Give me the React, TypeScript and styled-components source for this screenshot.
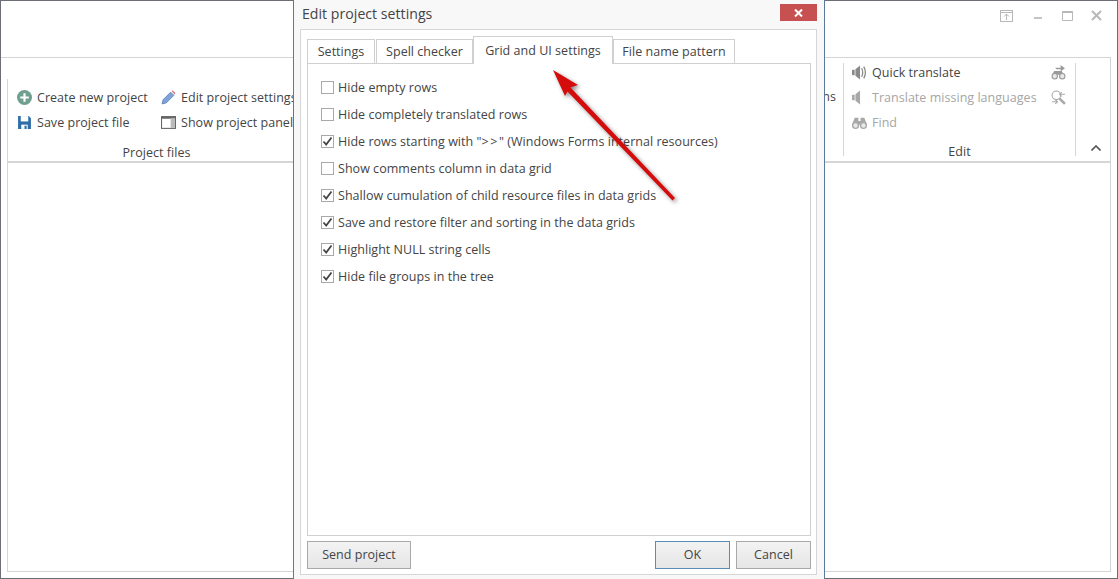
import React from "react";
import styled, { createGlobalStyle } from "styled-components";

const Global = createGlobalStyle`
  html, body { margin: 0; padding: 0; background: #fff; }
  body { font-family: "Open Sans", "Noto Sans", "Liberation Sans", sans-serif; font-size: 12.5px; letter-spacing: 0.03px; color: #444; }
  * { box-sizing: border-box; }
`;

const Desktop = styled.div`
  position: relative;
  width: 1118px;
  height: 579px;
  overflow: hidden;
`;

const AppWindow = styled.div`
  width: 100%;
  height: 100%;
  display: flex;
  flex-direction: column;
  background: #fff;
  border: 1px solid #6b6f75;
`;

const TitleBar = styled.div`
  height: 56px;
  display: flex;
  justify-content: flex-end;
  align-items: flex-start;
  padding: 9px 13px 0 0;
  gap: 16px;
  flex: none;
`;

const WinIcon = styled.svg<{ $ml?: number; $mr?: number }>`
  width: 13px;
  height: 13px;
  display: block;
  margin-left: ${(p) => p.$ml ?? 0}px;
  margin-right: ${(p) => p.$mr ?? 0}px;
`;

const RibbonFrame = styled.div`
  flex: 1;
  min-height: 0;
  display: flex;
  flex-direction: column;
  border-top: 1px solid #d4d4d4;
  margin-right: 6px;
`;

const Ribbon = styled.div`
  height: 105px;
  flex: none;
  display: flex;
  margin-left: 6px;
  border-bottom: 2px solid #d6d6d6;
  border-right: 1px solid #d4d4d4;
`;

const LeftGroup = styled.div`
  width: 290px;
  margin-top: 21px;
  display: flex;
  flex-direction: column;
  border-left: 1px solid #d6d6d6;
  padding: 6px 0 0 9px;
`;

const MiddleGroup = styled.div`
  flex: 1;
  display: flex;
  justify-content: flex-end;
  padding: 29px 7px 0 0;
  color: #444;
  line-height: 20px;
`;

const EditGroup = styled.div`
  width: 233px;
  margin: 5px 0;
  border-left: 1px solid #d6d6d6;
  border-right: 1px solid #d6d6d6;
  display: flex;
  flex-direction: column;
  padding: 0 0 0 8px;
`;

const EditRows = styled.div`
  margin-top: -3px;
`;

const Collapse = styled.div`
  width: 34px;
  display: flex;
  align-items: flex-end;
  justify-content: center;
  padding: 0 0 10px 6px;
`;

const Columns = styled.div`
  display: flex;
  gap: 14px;
`;

const Column = styled.div<{ $w: number }>`
  display: flex;
  flex-direction: column;
  width: ${(p) => p.$w}px;
  white-space: nowrap;
`;

const Command = styled.div<{ $off?: boolean }>`
  height: 25px;
  display: flex;
  align-items: center;
  gap: 5px;
  white-space: nowrap;
  color: ${(p) => (p.$off ? "#a6a6a6" : "#444")};
`;

const IconSlot = styled.svg`
  width: 15px;
  height: 15px;
  flex: none;
  display: block;
`;

const GroupCaption = styled.div`
  margin-top: auto;
  margin-bottom: -7px;
  text-align: center;
  height: 22px;
  line-height: 21px;
  color: #444;
  padding-right: 8px;
`;

const LeftCaption = styled(GroupCaption)`
  margin-bottom: -3px;
  margin-left: -9px;
  padding: 0 0 0 8px;
`;

const EditRow = styled.div`
  display: flex;
  justify-content: space-between;
  padding-right: 9px;
  align-items: center;
`;

const ContentPane = styled.div`
  flex: 1;
  margin: 0 0 6px 6px;
  border-left: 1px solid #d6d6d6;
  border-right: 1px solid #d4d4d4;
  border-bottom: 1px solid #d4d4d4;
`;

const Dialog = styled.div`
  position: absolute;
  left: 293px;
  top: 0;
  width: 532px;
  height: 579px;
  background: #f8f8f8;
  border-left: 1px solid #5b7a99;
  border-right: 1px solid #5b7a99;
  display: flex;
  flex-direction: column;
  padding: 0 7px 4px 6px;
`;

const DialogTitle = styled.div`
  height: 29px;
  flex: none;
  display: flex;
  justify-content: space-between;
  padding: 4px 0 0 2px;
  font-size: 14.1px;
  line-height: 20px;
  color: #444;
`;

const CloseButton = styled.div`
  width: 37px;
  height: 17px;
  background: #c75050;
  display: flex;
  align-items: center;
  justify-content: center;
`;

const DialogFrame = styled.div`
  flex: 1;
  min-height: 0;
  background: #fff;
  border: 1px solid #d6d6d6;
  display: flex;
  flex-direction: column;
  padding: 6px 5px 5px 6px;
`;

const TabStrip = styled.div`
  height: 28px;
  flex: none;
  display: flex;
  align-items: flex-end;
  position: relative;
  z-index: 1;
`;

const Tab = styled.div<{ $active?: boolean; $w: number }>`
  width: ${(p) => p.$w}px;
  height: ${(p) => (p.$active ? 28 : 25)}px;
  border: 1px solid #d0d0d0;
  border-bottom: ${(p) => (p.$active ? "none" : "1px solid #d0d0d0")};
  margin-right: ${(p) => (p.$active ? 0 : 1)}px;
  margin-left: ${(p) => (p.$active ? -1 : 0)}px;
  background: #fff;
  display: flex;
  justify-content: center;
  align-items: center;
  padding-bottom: ${(p) => (p.$active ? 1 : 0)}px;
  color: #444;
  white-space: nowrap;
`;

const TabBody = styled.div`
  flex: 1;
  min-height: 0;
  margin-top: -1px;
  border: 1px solid #d0d0d0;
  padding: 10px 0 0 13px;
  display: flex;
  flex-direction: column;
`;

const CheckRow = styled.div`
  height: 27px;
  display: flex;
  align-items: center;
  gap: 4px;
  white-space: pre;
  color: #444;
`;

const Box = styled.span`
  width: 13px;
  height: 13px;
  border: 1px solid #a9a9a9;
  background: #fff;
  flex: none;
  display: flex;
  align-items: center;
  justify-content: center;
`;

const Wide = styled.span`
  letter-spacing: 1.6px;
`;

const Footer = styled.div`
  height: 33px;
  flex: none;
  display: flex;
  align-items: flex-end;
  gap: 6px;
`;

const Button = styled.div<{ $w: number; $primary?: boolean }>`
  width: ${(p) => p.$w}px;
  height: 28px;
  padding-bottom: 2px;
  border: 1px solid ${(p) => (p.$primary ? "#5b8cb8" : "#a9a9a9")};
  background: linear-gradient(#f3f3f3, #e6e6e6);
  display: flex;
  align-items: center;
  justify-content: center;
  color: #444;
`;

const FooterGap = styled.div`
  flex: 1;
`;

const Arrow = styled.svg`
  position: absolute;
  left: 0;
  top: 0;
  width: 1118px;
  height: 579px;
  pointer-events: none;
  filter: drop-shadow(2px 2px 2px rgba(0, 0, 0, 0.45));
`;

const Speaker = ({ waves, color }: { waves: boolean; color: string }) => (
  <IconSlot viewBox="0 0 14 14">
    <rect x="0" y="4.5" width="2.5" height="5" fill={color} />
    <path d="M3.2 4 L7.5 0.5 V13.5 L3.2 10 Z" fill={color} />
    {waves && <path d="M9 3 Q11 7 9 11 M11 1.5 Q14 7 11 12.5" fill="none" stroke={color} strokeWidth="1.2" />}
  </IconSlot>
);

const Binoculars = ({ color }: { color: string }) => (
  <IconSlot viewBox="0 0 14 14">
    <path d="M2.5 2.5 H6 V5.5 H8 V2.5 H11.5 L14 9 H0 Z" fill={color} />
    <circle cx="3.3" cy="9.8" r="2.7" fill="#e8e8e8" stroke={color} strokeWidth="1.3" />
    <circle cx="10.7" cy="9.8" r="2.7" fill="#e8e8e8" stroke={color} strokeWidth="1.3" />
  </IconSlot>
);

const checks: [React.ReactNode, boolean][] = [
  ["Hide empty rows", false],
  ["Hide completely translated rows", false],
  [<span key="w">Hide rows starting with "<Wide>&gt;&gt;</Wide>" (Windows Forms internal resources)</span>, true],
  ["Show comments column in data grid", false],
  ["Shallow cumulation of child resource files in data grids", true],
  ["Save and restore filter and sorting in the data grids", true],
  ["Highlight NULL string cells", true],
  ["Hide file groups in the tree", true],
];

export default function App() {
  return (
    <Desktop>
      <Global />
      <AppWindow>
        <TitleBar>
          <WinIcon viewBox="0 0 13 13" $mr={2}>
            <rect x="0.5" y="0.5" width="12" height="11" fill="none" stroke="#b8b8b8" />
            <path d="M0 2.5 H13 M6.5 10 V4 M4 6.5 L6.5 4 L9 6.5" fill="none" stroke="#b8b8b8" />
          </WinIcon>
          <WinIcon viewBox="0 0 13 13" $ml={2}>
            <rect x="1" y="7" width="8" height="2" fill="#c4c4c4" />
          </WinIcon>
          <WinIcon viewBox="0 0 13 13">
            <path d="M0.5 1.5 H10.5 V10.5 H0.5 Z" fill="none" stroke="#b8b8b8" />
            <rect x="0.5" y="1" width="10" height="2" fill="#b8b8b8" />
          </WinIcon>
          <WinIcon viewBox="0 0 13 13">
            <path d="M1 1 L10 10 M10 1 L1 10" stroke="#b8b8b8" strokeWidth="2" />
          </WinIcon>
        </TitleBar>
        <RibbonFrame>
          <Ribbon>
            <LeftGroup>
              <Columns>
                <Column $w={130}>
                  <Command>
                    <IconSlot viewBox="0 0 14 14">
                      <circle cx="7" cy="7" r="7" fill="#6fa08f" />
                      <path d="M7 3 V11 M3 7 H11" stroke="#fff" strokeWidth="2" />
                    </IconSlot>
                    Create new project
                  </Command>
                  <Command>
                    <IconSlot viewBox="0 0 14 14">
                      <path d="M1 1 H11 L13 3 V13 H1 Z" fill="#2f6da8" />
                      <rect x="3.5" y="1" width="7" height="5" fill="#fff" />
                      <rect x="4" y="9" width="6" height="4" fill="#fff" />
                      <rect x="7" y="10" width="2" height="3" fill="#2f6da8" />
                    </IconSlot>
                    Save project file
                  </Command>
                </Column>
                <Column $w={140}>
                  <Command>
                    <IconSlot viewBox="0 0 14 14">
                      <path d="M1 13 L2 9 L9 2 L12 5 L5 12 Z" fill="#7fa3d6" stroke="#5b7fb5" strokeWidth="0.8" />
                      <path d="M10 1 L11 0.5 L13.5 3 L12.8 4.2 Z" fill="#d9636b" />
                    </IconSlot>
                    Edit project settings
                  </Command>
                  <Command>
                    <IconSlot viewBox="0 0 14 14">
                      <rect x="0.5" y="1.5" width="13" height="11" fill="#fff" stroke="#666" />
                      <rect x="0.5" y="1.5" width="13" height="2" fill="#666" />
                      <rect x="9" y="3" width="4" height="9" fill="#bbb" />
                    </IconSlot>
                    Show project panel
                  </Command>
                </Column>
              </Columns>
              <LeftCaption>Project files</LeftCaption>
            </LeftGroup>
            <MiddleGroup>ns</MiddleGroup>
            <EditGroup>
              <EditRows>
                <EditRow>
                  <Command>
                    <Speaker waves color="#8a8a8a" />
                    Quick translate
                  </Command>
                  <IconSlot viewBox="0 0 14 14">
                    <path d="M4 2.5 H9 V0 L13 3 L9 6 V4 H5 Z" fill="#9a9a9a" />
                    <path d="M3 5.5 H10 L12 9 H1 Z" fill="#9a9a9a" />
                    <circle cx="3.5" cy="10.5" r="2.5" fill="#e8e8e8" stroke="#9a9a9a" />
                    <circle cx="10.5" cy="10.5" r="2.5" fill="#e8e8e8" stroke="#9a9a9a" />
                  </IconSlot>
                </EditRow>
                <EditRow>
                  <Command $off>
                    <Speaker waves={false} color="#a8a8a8" />
                    Translate missing languages
                  </Command>
                  <IconSlot viewBox="0 0 14 14">
                    <circle cx="5" cy="5" r="4" fill="none" stroke="#a8a8a8" />
                    <path d="M8 8 L13 13" stroke="#a8a8a8" strokeWidth="2.4" />
                    <path d="M13 4 H8 M10 2 L8 4 L10 6 M1 11 H6 M4 9 L6 11 L4 13" fill="none" stroke="#a8a8a8" />
                  </IconSlot>
                </EditRow>
                <Command $off>
                  <Binoculars color="#a8a8a8" />
                  Find
                </Command>
              </EditRows>
              <GroupCaption>Edit</GroupCaption>
            </EditGroup>
            <Collapse>
              <svg width="10" height="6" viewBox="0 0 10 6">
                <path d="M0.5 5.5 L5 1 L9.5 5.5" fill="none" stroke="#555" strokeWidth="1.6" />
              </svg>
            </Collapse>
          </Ribbon>
          <ContentPane />
        </RibbonFrame>
      </AppWindow>

      <Dialog>
        <DialogTitle>
          Edit project settings
          <CloseButton>
            <svg width="9" height="8" viewBox="0 0 9 8">
              <path d="M1 0.5 L8 7.5 M8 0.5 L1 7.5" stroke="#fff" strokeWidth="2" />
            </svg>
          </CloseButton>
        </DialogTitle>
        <DialogFrame>
          <TabStrip>
            <Tab $w={68}>Settings</Tab>
            <Tab $w={97}>Spell checker</Tab>
            <Tab $active $w={140}>Grid and UI settings</Tab>
            <Tab $w={122}>File name pattern</Tab>
          </TabStrip>
          <TabBody>
            {checks.map(([label, on], i) => (
              <CheckRow key={i}>
                <Box>
                  {on && (
                    <svg width="11" height="11" viewBox="0 0 11 11">
                      <path d="M1.5 5.5 L4.2 8.5 L9.5 1.5" fill="none" stroke="#444" strokeWidth="1.8" />
                    </svg>
                  )}
                </Box>
                {label}
              </CheckRow>
            ))}
          </TabBody>
          <Footer>
            <Button $w={104}>Send project</Button>
            <FooterGap />
            <Button $w={75} $primary>OK</Button>
            <Button $w={75}>Cancel</Button>
          </Footer>
        </DialogFrame>
      </Dialog>

      <Arrow viewBox="0 0 1118 579">
        <polygon points="553,70 578,85 570.5,87.5 675,198 672.5,200.5 567.5,91.5 565,96" fill="#d40c0c" />
      </Arrow>
    </Desktop>
  );
}
